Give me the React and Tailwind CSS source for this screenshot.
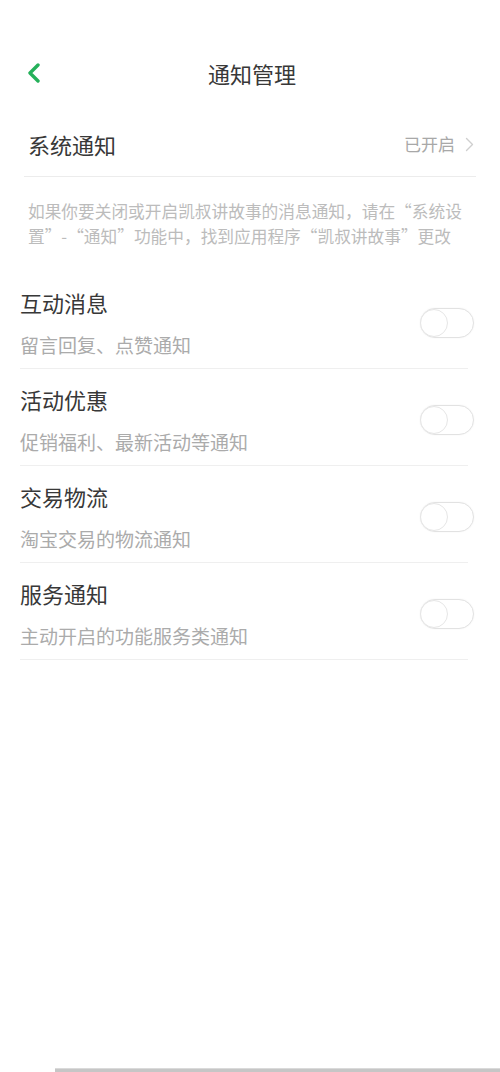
import React from "react";

const items = [
  { title: "互动消息", desc: "留言回复、点赞通知" },
  { title: "活动优惠", desc: "促销福利、最新活动等通知" },
  { title: "交易物流", desc: "淘宝交易的物流通知" },
  { title: "服务通知", desc: "主动开启的功能服务类通知" },
];

function Toggle() {
  return (
    <div className="w-[54px] h-[30px] rounded-full border-[1.5px] border-[#e2e2e2] bg-white flex items-center shadow-[0_0_2px_rgba(0,0,0,0.05)]">
      <div className="w-[28px] h-[28px] rounded-full border-[1.5px] border-[#e6e6e6] bg-white -ml-[1.5px]" />
    </div>
  );
}

export default function App() {
  return (
    <div
      className="h-[1072px] w-[500px] bg-white flex flex-col text-[#383838]"
      style={{ fontFamily: '"Noto Sans CJK SC", "Noto Sans", sans-serif' }}
    >
      <header className="mt-[46px] h-[54px] flex items-center relative">
        <button className="absolute left-[24px] top-[16px] w-[20px] h-[22px] flex items-center justify-center">
          <svg width="14" height="20" viewBox="0 0 14 20" fill="none">
            <path d="M11 2 L3 10 L11 18" stroke="#25b05a" strokeWidth="3.4" strokeLinecap="round" strokeLinejoin="round" />
          </svg>
        </button>
        <h1 className="w-full text-center text-[22px] leading-[28px] pl-[4px]">通知管理</h1>
      </header>

      <div className="mx-[24px] pt-[30px] pb-[18px] border-b border-[#ececec] flex items-center justify-between">
        <span className="text-[22px] leading-[28px] pl-[4px]">系统通知</span>
        <div className="flex items-center gap-[10px] pr-[2px]">
          <span className="text-[17px] leading-[28px] text-[#a8a8a8]">已开启</span>
          <svg width="9" height="15" viewBox="0 0 9 15" fill="none">
            <path d="M1.5 1.5 L7.5 7.5 L1.5 13.5" stroke="#cfcfcf" strokeWidth="1.4" strokeLinecap="round" strokeLinejoin="round" />
          </svg>
        </div>
      </div>

      <p className="pt-[22px] pl-[28px] w-[472px] text-[16.7px] leading-[25px] text-[#bcbcbc]">
        如果你要关闭或开启凯叔讲故事的消息通知，请在“系统设置”-“通知”功能中，找到应用程序“凯叔讲故事”更改
      </p>

      <div className="mt-[23px]">
        {items.map((it) => (
          <div key={it.title} className="pl-[20px] pr-[26px]">
            <div className="flex items-center justify-between pt-[16px] pb-[10px]">
              <div className="flex flex-col gap-[16px]">
                <span className="text-[22px] leading-[28px]">{it.title}</span>
                <span className="text-[19px] leading-[26px] text-[#ababab]">{it.desc}</span>
              </div>
              <Toggle />
            </div>
            <div className="h-px bg-[#efefef] mr-[6px]" />
          </div>
        ))}
      </div>

      <div className="mt-auto ml-[55px] h-[4px] bg-[#c6c6c6] border-t border-[#dadada]" />
    </div>
  );
}
